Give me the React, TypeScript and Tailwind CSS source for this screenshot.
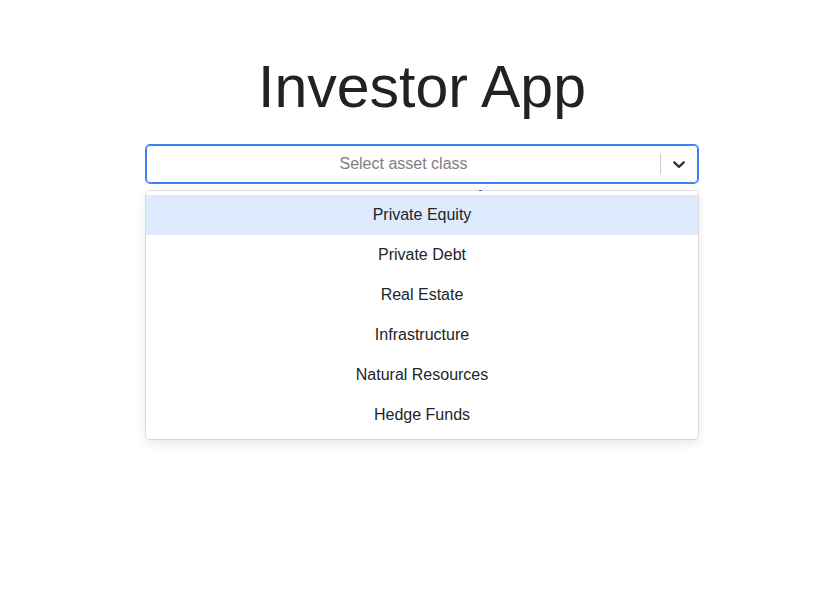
import React from "react";

const options = [
  "Private Equity",
  "Private Debt",
  "Real Estate",
  "Infrastructure",
  "Natural Resources",
  "Hedge Funds",
];

export default function App() {
  return (
    <div
      className="min-h-[593px] w-full bg-white text-[#212529]"
      style={{ fontFamily: '"Liberation Sans", Arial, sans-serif' }}
    >
      <div className="flex flex-col items-center pl-[31px] pt-[52px]">
        <h1 className="text-[59px] leading-[1.2] font-normal text-[#222222]">Investor App</h1>
        <div className="relative mt-[22px] w-[552px]">
          <div className="flex h-[38px] items-center rounded-[4px] border border-[#3b82f6] shadow-[0_0_0_1px_#3b82f6]">
            <div className="flex flex-1 items-center justify-center px-2 text-[16px] text-[#808080]">
              Select asset class
            </div>
            <div className="flex h-full items-center">
              <span className="my-2 h-[20px] w-px bg-[#cccccc]" />
              <div className="flex items-center p-2 text-[#333333]">
                <svg viewBox="0 0 20 20" width="20" height="20" fill="currentColor">
                  <path d="M4.516 7.548c0.436-0.446 1.043-0.481 1.576 0l3.908 3.747 3.908-3.747c0.533-0.481 1.141-0.446 1.574 0 0.436 0.445 0.408 1.197 0 1.615-0.406 0.418-4.695 4.502-4.695 4.502-0.217 0.223-0.502 0.335-0.787 0.335s-0.57-0.112-0.789-0.335c0 0-4.287-4.084-4.695-4.502s-0.436-1.17 0-1.615z" />
                </svg>
              </div>
            </div>
          </div>
          <div className="absolute left-[333px] top-[45px] h-px w-[3px] bg-[#3b82f6]" />
          <div className="absolute left-0 right-0 top-[46px] rounded-[4px] bg-white py-1 shadow-[0_0_0_1px_rgba(0,0,0,0.1),0_4px_11px_rgba(0,0,0,0.1)]">
            {options.map((o, i) => (
              <div
                key={o}
                className={`flex h-[40px] items-center justify-center text-[16px] text-[#212529] ${
                  i === 0 ? "bg-[#DEEBFF]" : "bg-white"
                }`}
              >
                {o}
              </div>
            ))}
          </div>
        </div>
      </div>
    </div>
  );
}
